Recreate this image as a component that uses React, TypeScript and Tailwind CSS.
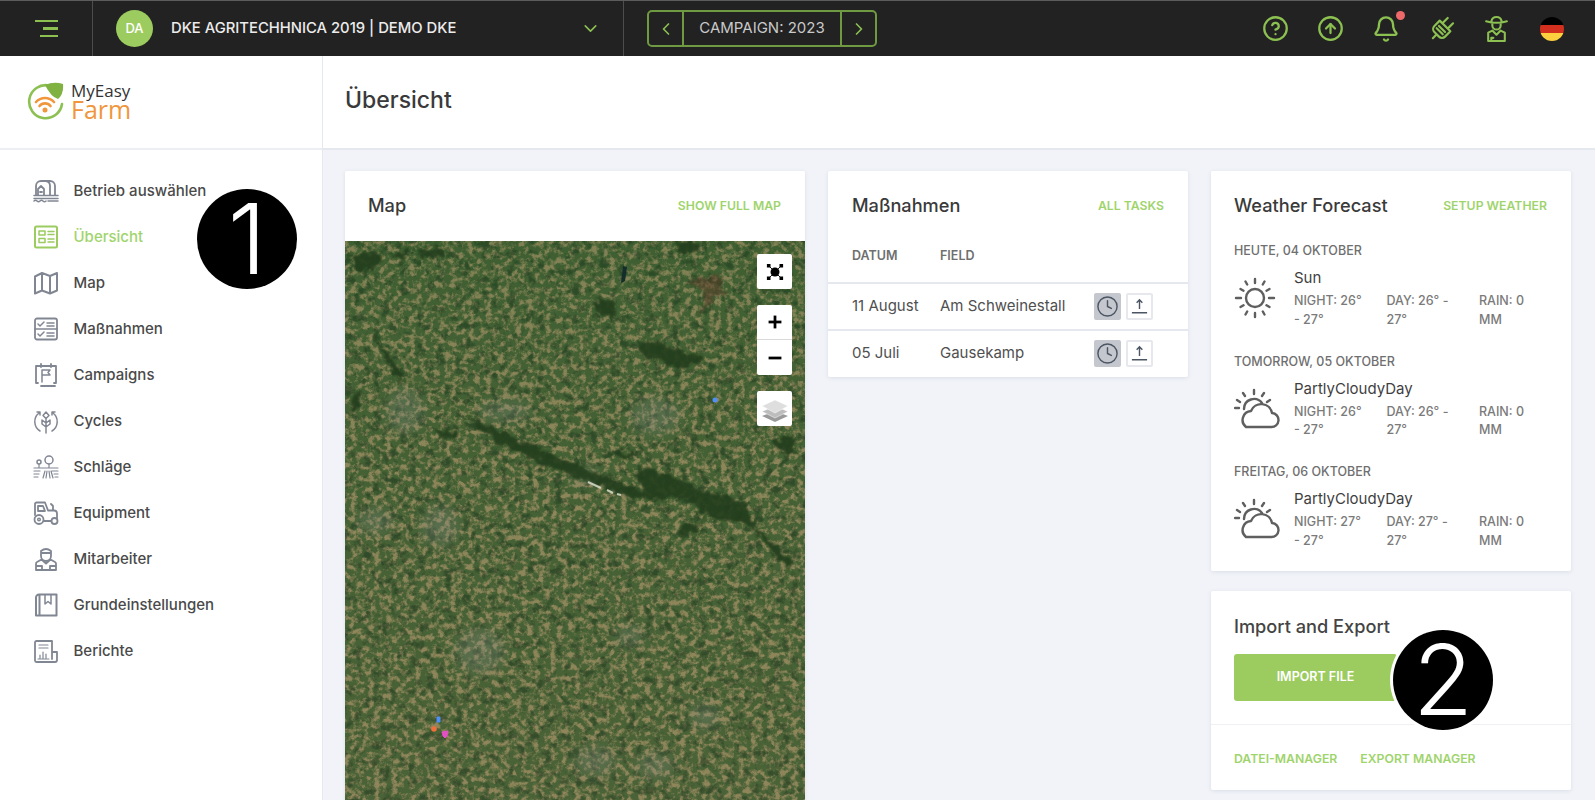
import React from 'react';
import { ChevronDown, ChevronLeft, ChevronRight, CircleHelp, CircleArrowUp, Bell, Clock, Plus, Minus } from 'lucide-react';

const Ico: React.FC<{ children: React.ReactNode; active?: boolean }> = ({ children, active }) => (
    <svg
        viewBox="0 0 26 26"
        fill="none"
        strokeWidth="1.5"
        strokeLinecap="round"
        strokeLinejoin="round"
        className={active ? 'w-[26px] h-[26px] stroke-[#9ccb5f]' : 'w-[26px] h-[26px] stroke-[#808692]'}
    >
        {children}
    </svg>
);

const navItems: { label: string; active?: boolean; icon: React.ReactNode }[] = [
    {
        label: 'Betrieb auswählen',
        icon: (
            <>
                <path d="M3 17V8a5 5 0 0 1 5-5h9a5 5 0 0 1 5 5v9" strokeWidth="1.800" />
                <path d="M13 3a5 5 0 0 1 4 5v9M5 17v-6l3-3 3 3v6M7 14h2" strokeWidth="1.800" />
                <path d="M1 17.500h24M1 20.500h24" />
                <path d="M1 23q1.500-1.500 3 0t3 0 3 0 3 0M15 23h10" />
            </>
        ),
    },
    {
        label: 'Übersicht',
        active: true,
        icon: (
            <>
                <rect x="2" y="2.500" width="22" height="21" rx="1.500" strokeWidth="2" />
                <rect x="6" y="7" width="6" height="4" />
                <rect x="6" y="14.500" width="6" height="4" />
                <path d="M15 7.500h6M15 10.500h6M15 15h6M15 18h6" />
            </>
        ),
    },
    {
        label: 'Map',
        icon: <path strokeWidth="2" d="M2 6.500 9 3l8 3 7-3v17.500L17 23.500l-8-3-7 3zM9 3v17.500M17 6v17.500" />,
    },
    {
        label: 'Maßnahmen',
        icon: (
            <>
                <rect x="2" y="2.500" width="22" height="21" rx="2" strokeWidth="1.800" />
                <path d="M2 13h22M5 8l2 2 4-4M5 18l2 2 4-4M14 7h7M14 10h7M14 17h7M14 20h7" />
            </>
        ),
    },
    {
        label: 'Campaigns',
        icon: (
            <>
                <path d="M5 4H3v17h2M21 4h2v17h-2M8 24h14M6 4h15M8 2v3M18 2v3" strokeWidth="1.800" />
                <path d="M9 20V8h8l-2 2.500L17 13H9" />
            </>
        ),
    },
    {
        label: 'Cycles',
        icon: (
            <>
                <path d="M13 25V10M13 4l3 3.500-3 3-3-3zM13 15l4-3v4l-4 3M13 15l-4-3v4l4 3" />
                <path d="M6 5a11 11 0 0 0 1 18M20 5a11 11 0 0 1-1 18M4 4l3 0 0 3M22 4l-3 0 0 3" />
            </>
        ),
    },
    {
        label: 'Schläge',
        icon: (
            <>
                <circle cx="16" cy="6" r="4" />
                <circle cx="6" cy="8" r="2" />
                <path d="M16 10v4M6 10v4M1 14h24M12 17l-2 7M14 17l-1 7M16 17l1 7M18 17l2 7M1 17h6M1 20h5M1 23h4M19 17h6M21 20h4M22 23h3" strokeWidth="1.200" />
            </>
        ),
    },
    {
        label: 'Equipment',
        icon: (
            <>
                <circle cx="6" cy="19.500" r="4.500" strokeWidth="1.800" />
                <circle cx="6" cy="19.500" r="1.300" />
                <circle cx="21.500" cy="21" r="3" strokeWidth="1.800" />
                <path d="M2 15V4a1.500 1.500 0 0 1 1.500-1.500H12l3 8h6a3 3 0 0 1 3 3v5M11 21h7M5 6h5l2 5H5zM20 10V6l-2-2" strokeWidth="1.800" />
            </>
        ),
    },
    {
        label: 'Mitarbeiter',
        icon: (
            <>
                <path d="M8 5q5-4 10 0v2H8zM8 7v3a5 5 0 0 0 10 0V7" strokeWidth="1.800" />
                <path d="M8.500 13.500 4 16a2 2 0 0 0-1 2v6h20v-6a2 2 0 0 0-1-2l-4.500-2.500L13 17.500zM3 20h6v4M23 20h-6v4" strokeWidth="1.800" />
            </>
        ),
    },
    {
        label: 'Grundeinstellungen',
        icon: (
            <>
                <path strokeWidth="2" d="M6 2.500h17.500v21H3V5.500a3 3 0 0 1 3-3zM6.500 2.500v21" />
                <path d="M12 3v9l3-2.500 3 2.500V3" />
            </>
        ),
    },
    {
        label: 'Berichte',
        icon: (
            <>
                <path strokeWidth="1.800" d="M19 21V3H3.500A1.500 1.500 0 0 0 2 4.500v18A1.500 1.500 0 0 0 3.500 24H22a2 2 0 0 0 2-2v-8h-5" />
                <path d="M6 7h9M6 10h9M7 20v-3M10 20v-6M13 20v-4M5 21h11" strokeWidth="1.200" />
            </>
        ),
    },
];

const days = [
    { title: 'HEUTE, 04 OKTOBER', name: 'Sun', night: '26°', day: '26°', sun: true },
    { title: 'TOMORROW, 05 OKTOBER', name: 'PartlyCloudyDay', night: '26°', day: '26°', sun: false },
    { title: 'FREITAG, 06 OKTOBER', name: 'PartlyCloudyDay', night: '27°', day: '27°', sun: false },
];

const tasks = [
    { date: '11 August', field: 'Am Schweinestall' },
    { date: '05 Juli', field: 'Gausekamp' },
];

const SunIcon = () => (
    <svg viewBox="0 0 42 42" className="w-[42px] h-[42px]" fill="none" stroke="#5f5f5f" strokeWidth="2.400" strokeLinecap="round">
        <circle cx="21" cy="21" r="9" />
        <path d="M21 2v4M21 36v4M2 21h5M35 21h5M6.500 12l3 1.700M32.500 28.300l3 1.700M6.500 30l3-1.700M32.500 13.700l3-1.700M11.500 4.500l1.700 3M28.800 34.500l1.700 3M11.500 37.500l1.700-3M28.800 7.500l1.700-3" />
    </svg>
);

const CloudSunIcon = () => (
    <svg viewBox="0 0 46 42" className="w-[46px] h-[42px]" fill="none" stroke="#5f5f5f" strokeWidth="2.400" strokeLinecap="round" strokeLinejoin="round">
        <path d="M20 2v4M9 5l2 3M30 5l-2 3M3 12l3 2M36 12l-3 2M1 20h4" />
        <path d="M10 21a10 10 0 0 1 18-6" />
        <path d="M12 39h25a7 7 0 0 0 1-14 11 11 0 0 0-21-2 9 9 0 0 0-5 16z" />
    </svg>
);

// satellite picture, faked with noise filters
const MapImage = () => (
    <svg viewBox="0 0 460 570" preserveAspectRatio="none" className="block w-full h-full">
        <defs>
            <filter id="fields" x="0" y="0" width="100%" height="100%" colorInterpolationFilters="sRGB">
                <feTurbulence type="fractalNoise" baseFrequency="0.17" numOctaves="4" seed="11" />
                <feColorMatrix values="0 0 0 0 0.66  0 0 0 0 0.58  0 0 0 0 0.41  4 0 0 0 -1.750" />
                <feGaussianBlur stdDeviation="0.5" />
            </filter>
            <filter id="dark" x="0" y="0" width="100%" height="100%" colorInterpolationFilters="sRGB">
                <feTurbulence type="fractalNoise" baseFrequency="0.11" numOctaves="4" seed="4" />
                <feColorMatrix values="0 0 0 0 0.13  0 0 0 0 0.24  0 0 0 0 0.13  0 4.500 0 0 -2.350" />
                <feGaussianBlur stdDeviation="0.5" />
            </filter>
            <filter id="rough" x="-20%" y="-20%" width="140%" height="140%">
                <feTurbulence type="fractalNoise" baseFrequency="0.1" numOctaves="3" seed="9" result="n" />
                <feDisplacementMap in="SourceGraphic" in2="n" scale="14" xChannelSelector="R" yChannelSelector="G" />
                <feGaussianBlur stdDeviation="0.8" />
            </filter>
            <filter id="softer" x="-30%" y="-30%" width="160%" height="160%">
                <feGaussianBlur stdDeviation="6" />
            </filter>
            <linearGradient id="tone" x1="0" y1="0" x2="0" y2="1">
                <stop offset="0" stopColor="#2f5c28" stopOpacity="0.18" />
                <stop offset="0.45" stopColor="#5b6a3a" stopOpacity="0.1" />
                <stop offset="1" stopColor="#7a7048" stopOpacity="0.15" />
            </linearGradient>
        </defs>
        <rect width="460" height="570" fill="#426034" />
        <rect width="460" height="570" filter="url(#fields)" opacity="0.8" />
        <rect width="460" height="570" filter="url(#dark)" opacity="0.7" />
        <rect width="460" height="570" fill="url(#tone)" />
        <g filter="url(#softer)" fill="#868d84" opacity="0.28">
            <ellipse cx="60" cy="170" rx="18" ry="22" />
            <ellipse cx="95" cy="285" rx="18" ry="20" />
            <ellipse cx="310" cy="175" rx="24" ry="18" />
            <ellipse cx="160" cy="170" rx="26" ry="10" />
            <ellipse cx="30" cy="280" rx="18" ry="12" />
            <ellipse cx="135" cy="410" rx="24" ry="22" />
            <ellipse cx="285" cy="395" rx="14" ry="10" />
            <ellipse cx="250" cy="520" rx="20" ry="14" />
            <ellipse cx="310" cy="525" rx="18" ry="12" />
            <ellipse cx="360" cy="475" rx="14" ry="12" />
            <ellipse cx="240" cy="235" rx="14" ry="8" />
        </g>
        <g filter="url(#rough)" fill="#203c1e" opacity="0.9">
            <path d="M120 172 165 195 205 213 250 232 300 250 345 254 340 258 290 258 235 238 190 219 150 202z" />
            <path d="M290 228 325 232 350 248 400 262 412 288 368 276 340 258 300 252z" />
            <path d="M405 284 425 298 448 320 444 326 418 302z" />
            <path d="M6 12 30 10 34 26 12 30zM46 14 62 8 58 22zM70 6 98 8 100 18 78 18z" />
            <path d="M250 60 272 60 272 74 254 76z" />
            <path d="M328 2 358 2 352 12 336 12z" />
            <path d="M30 95 55 130 60 143 54 140 36 110z" />
            <path d="M90 190 116 190 112 198 96 196z" />
            <path d="M292 100 318 104 360 118 340 126 300 116z" />
            <path d="M268 210 290 212 292 218 272 216z" />
            <path d="M426 198 452 198 448 212 432 210z" />
            <path d="M335 285 358 282 352 292 335 293z" />
            <path d="M5 155 15 150 18 168 6 172z" />
        </g>
        <path d="M345 42 372 32 378 50 355 72 362 52z" fill="#5b3b2b" opacity="0.5" filter="url(#rough)" />
        <path d="M278 25 282 26 280 40 276 42z" fill="#142d2d" />
        <path d="M243 241 256 247M262 249 268 252M272 253 276 254" stroke="#d9ddcb" strokeWidth="2" opacity="0.85" />
        <circle cx="370" cy="159" r="2.500" fill="#4f8ff7" />
        <path d="M92 476h3v5h-3z" fill="#4f8ff7" stroke="#4f8ff7" strokeLinejoin="round" />
        <circle cx="89" cy="488" r="2.800" fill="#ee6f3c" />
        <path d="M97 491 103 490 102 495 100 497 98 495z" fill="#e34fc4" stroke="#e34fc4" />
    </svg>
);

const Card: React.FC<{ children: React.ReactNode; className?: string }> = ({ children, className }) => (
    <div className={`bg-white rounded-[2px] shadow-[0_1px_4px_rgba(60,70,100,0.12)] ${className ?? ''}`}>{children}</div>
);

const CardHead: React.FC<{ title: string; link: string; pad?: string }> = ({ title, link, pad }) => (
    <div className={`flex items-center justify-between h-[70px] pr-6 ${pad ?? 'pl-[23px]'}`}>
        <h2 className="text-[18.200px] font-medium text-[#3a3a3a]">{title}</h2>
        <a className="text-[12.250px] font-semibold text-[#9fd46d]">{link}</a>
    </div>
);

const Badge: React.FC<{ n: string; className: string }> = ({ n, className }) => (
    <div className={`absolute w-[100px] h-[100px] rounded-full bg-black flex items-center justify-center text-white text-[98px] font-light leading-none ${className}`}>
        {n}
    </div>
);

const Stat: React.FC<{ first: string; second: string }> = ({ first, second }) => (
    <div>
        <div>{first}</div>
        <div>{second}</div>
    </div>
);

export default function App() {
    return (
        <div className="relative h-[800px] overflow-hidden bg-[#f1f3f8] font-['Inter',sans-serif]">
            <header className="flex h-[56px] items-stretch bg-[#222222] border-t border-[#5c5c5c]">
                <div className="w-[93px] flex items-center justify-center border-r border-[#4d4d4d]">
                    <div className="flex flex-col items-end gap-[5px]">
                        <span className="block w-[23px] h-[2.500px] bg-[#8cc152]" />
                        <span className="block w-[15px] h-[2.500px] bg-[#8cc152]" />
                        <span className="block w-[18px] h-[2.500px] bg-[#8cc152]" />
                    </div>
                </div>
                <div className="w-[531px] flex items-center pl-[23px] pr-[22px] border-r border-[#4d4d4d]">
                    <div className="w-[37px] h-[37px] rounded-full bg-[#9ccb5f] flex items-center justify-center text-[13px] font-medium text-white">DA</div>
                    <span className="ml-[18px] text-[14.800px] font-medium text-[#ececec]">DKE AGRITECHHNICA 2019 | DEMO DKE</span>
                    <ChevronDown className="ml-auto text-[#8cc152]" size={21} strokeWidth={1.8} />
                </div>
                <div className="flex items-center ml-[23px]">
                    <div className="flex h-[37px] w-[230px] items-stretch rounded-[5px] border-2 border-[#6f9a42] text-[#c9c9c9]">
                        <div className="w-[35px] flex items-center justify-center border-r-2 border-[#6f9a42]">
                            <ChevronLeft className="text-[#8cc152]" size={20} />
                        </div>
                        <div className="flex-1 flex items-center justify-center text-[15px]">CAMPAIGN: 2023</div>
                        <div className="w-[35px] flex items-center justify-center border-l-2 border-[#6f9a42]">
                            <ChevronRight className="text-[#8cc152]" size={20} />
                        </div>
                    </div>
                </div>
                <div className="ml-auto flex items-center pr-[15px] text-[#8cc152]">
                    <div className="w-[55.400px] flex justify-center"><CircleHelp size={27} strokeWidth={2} /></div>
                    <div className="w-[55.400px] flex justify-center"><CircleArrowUp size={27} strokeWidth={2} /></div>
                    <div className="w-[55.400px] flex justify-center">
                        <div className="relative">
                            <Bell size={28} strokeWidth={2} />
                            <span className="absolute -top-[4px] right-[-5px] w-[9px] h-[9px] rounded-full bg-[#ee6a6a]" />
                        </div>
                    </div>
                    <div className="w-[55.400px] flex justify-center">
                        <svg viewBox="0 0 26 26" className="w-[28px] h-[28px]" fill="none" stroke="currentColor" strokeWidth="2" strokeLinecap="round" strokeLinejoin="round">
                            <g transform="rotate(45 13 13)">
                                <path d="M6 9h14v7a4 4 0 0 1-4 4h-6a4 4 0 0 1-4-4zM9.500 9V2M16.500 9V2M13 20v5M9 13h8M9 16h8" />
                            </g>
                        </svg>
                    </div>
                    <div className="w-[55.400px] flex justify-center">
                        <svg viewBox="0 0 26 26" className="w-[27px] h-[27px]" fill="none" stroke="currentColor" strokeWidth="2" strokeLinecap="round" strokeLinejoin="round">
                            <path d="M3 6q10 3 20 0M8 6q1-4 5-4t5 4M9 7v3a4 4 0 0 0 8 0V7" />
                            <path d="M9 15 5 17v8h16v-8l-4-2-4 4zM8 25v-3h2" />
                        </svg>
                    </div>
                    <div className="w-[55.400px] flex justify-center">
                        <svg viewBox="0 0 24 24" className="w-[24px] h-[24px] rounded-full overflow-hidden">
                            <rect width="24" height="8" fill="#000000" />
                            <rect y="8" width="24" height="8" fill="#d22f1e" />
                            <rect y="16" width="24" height="8" fill="#fbcf3e" />
                        </svg>
                    </div>
                </div>
            </header>

            <div className="flex h-[744px]">
                <aside className="w-[323px] shrink-0 bg-white border-r border-[#e6e8ef]">
                    <div className="flex h-[94px] items-center pl-[27px] border-b-2 border-[#eceef3]">
                        <svg viewBox="0 0 38 38" className="w-[38px] h-[38px] -mt-[2px]" fill="none">
                            <path d="M22 3.500A16.500 16.500 0 1 0 35 22" stroke="#8cc152" strokeWidth="2.600" strokeLinecap="round" />
                            <path d="M18 3q9-4 18-1 1 10-5 15-7-2-13-14z" fill="#7fb241" />
                            <path d="M9 20a12 12 0 0 1 18 0M12.500 24a7 7 0 0 1 11 0" stroke="#f0963c" strokeWidth="2.600" strokeLinecap="round" />
                            <circle cx="18" cy="28" r="2.500" fill="#f0963c" />
                        </svg>
                        <div className="ml-[6px] flex flex-col font-['Open_Sans',sans-serif] -mt-[2px]">
                            <span className="text-[17px] leading-[17px] text-[#333333]">MyEasy</span>
                            <span className="text-[25px] leading-[21px] font-medium text-[#f0963c]">Farm</span>
                        </div>
                    </div>
                    <nav className="flex flex-col pt-[18px] pl-[33px]">
                        {navItems.map((item) => (
                            <a key={item.label} className="flex h-[46px] items-center gap-[14.500px]">
                                <Ico active={item.active}>{item.icon}</Ico>
                                <span className={item.active ? 'text-[15px] font-medium text-[#9fd46d]' : 'text-[15px] font-medium text-[#4a4a4a]'}>{item.label}</span>
                            </a>
                        ))}
                    </nav>
                </aside>

                <main className="flex-1 min-w-0">
                    <div className="flex h-[94px] items-center bg-white pl-[22px] pb-[4px] border-b-2 border-[#e6e8ef]">
                        <h1 className="text-[23px] font-medium text-[#3a3a3a]">Übersicht</h1>
                    </div>
                    <div className="grid grid-cols-[460px_360px_360px] gap-[23px] pl-[22px] pt-[21px]">
                        <Card className="flex flex-col h-[640px]">
                            <CardHead title="Map" link="SHOW FULL MAP" />
                            <div className="relative flex-1 min-h-0 overflow-hidden">
                                <MapImage />
                                <div className="absolute top-[13px] right-[13px] flex flex-col">
                                    <button className="w-[35px] h-[35px] bg-white rounded-[2px] flex items-center justify-center">
                                        <svg viewBox="0 0 20 20" className="w-[18px] h-[18px]" fill="#000000">
                                            <circle cx="10" cy="10" r="5" />
                                            <path d="M1 1h4v4H1zM15 1h4v4h-4zM1 15h4v4H1zM15 15h4v4h-4z" />
                                            <path d="M3 3l14 14M17 3 3 17" stroke="#000000" strokeWidth="1" />
                                        </svg>
                                    </button>
                                    <button className="mt-[16px] w-[35px] h-[35px] bg-white rounded-t-[2px] flex items-center justify-center border-b border-[#d9d9d9]">
                                        <Plus className="text-black" size={22} strokeWidth={3} strokeLinecap="butt" />
                                    </button>
                                    <button className="w-[35px] h-[35px] bg-white rounded-b-[2px] flex items-center justify-center">
                                        <Minus className="text-black" size={22} strokeWidth={3} strokeLinecap="butt" />
                                    </button>
                                    <button className="mt-[16px] w-[35px] h-[35px] bg-white rounded-[2px] flex items-center justify-center">
                                        <svg viewBox="0 0 28 28" className="w-[28px] h-[28px]">
                                            <path d="M14 16 27 21 14 27 1 21z" fill="#9a9a9a" />
                                            <path d="M14 11 27 16.500 14 23 1 16.500z" fill="#bdbdbd" stroke="#ffffff" strokeWidth="0.500" />
                                            <path d="M14 5 27 11 14 18 1 11z" fill="#dedede" stroke="#ffffff" strokeWidth="0.500" />
                                        </svg>
                                    </button>
                                </div>
                            </div>
                        </Card>

                        <Card className="h-[206px] self-start">
                            <CardHead title="Maßnahmen" link="ALL TASKS" pad="pl-6" />
                            <div className="flex h-[41px] items-start pt-[6px] px-6 text-[12.500px] font-semibold text-[#6f6f6f]">
                                <span className="w-[88px]">DATUM</span>
                                <span>FIELD</span>
                            </div>
                            {tasks.map((t) => (
                                <div key={t.date} className="flex h-[47px] items-center border-t-2 border-[#e6e8f0] px-6 text-[15px] text-[#4f4f4f]">
                                    <span className="w-[88px]">{t.date}</span>
                                    <span className="flex-1">{t.field}</span>
                                    <div className="flex gap-[5px] mr-[11px]">
                                        <button className="w-[27px] h-[27px] rounded-[2px] bg-[#c4c7cd] flex items-center justify-center">
                                            <Clock className="text-[#4b5563]" size={23} strokeWidth={1.5} />
                                        </button>
                                        <button className="w-[27px] h-[27px] rounded-[2px] border-2 border-[#e6e8ee] bg-white flex items-center justify-center">
                                            <svg viewBox="0 0 20 20" className="w-[19px] h-[19px]" fill="none" stroke="#4b5563" strokeWidth="1.500">
                                                <path d="M10 12.500V3M7 6l3-3 3 3M2 16.500h16" />
                                            </svg>
                                        </button>
                                    </div>
                                </div>
                            ))}
                        </Card>

                        <div className="flex flex-col gap-[20px]">
                            <Card className="h-[400px]">
                                <CardHead title="Weather Forecast" link="SETUP WEATHER" />
                                <div className="flex flex-col pl-[23px] pr-6 pt-[1px]">
                                    {days.map((d) => (
                                        <div key={d.title} className="h-[110.500px]">
                                            <div className="text-[12.500px] leading-[18px] font-medium text-[#6f6f6f]">{d.title}</div>
                                            <div className="flex mt-[8px]">
                                                <div className="w-[60px] shrink-0 pt-[9px]">{d.sun ? <SunIcon /> : <CloudSunIcon />}</div>
                                                <div className="flex-1">
                                                    <div className="text-[15px] leading-[20px] text-[#3f3f3f]">{d.name}</div>
                                                    <div className="grid grid-cols-3 w-[277.500px] mt-[4px] text-[12.500px] leading-[18.500px] font-medium text-[#7a7a7a]">
                                                        <Stat first={`NIGHT: ${d.night}`} second="- 27°" />
                                                        <Stat first={`DAY: ${d.day} -`} second="27°" />
                                                        <Stat first="RAIN: 0" second="MM" />
                                                    </div>
                                                </div>
                                            </div>
                                        </div>
                                    ))}
                                </div>
                            </Card>
                            <Card className="h-[199px]">
                                <div className="pl-[23px] pr-6 pt-[24px] h-[134px] border-b border-[#eef0f4]">
                                    <h2 className="text-[18.200px] leading-[22px] font-medium text-[#444444]">Import and Export</h2>
                                    <button className="mt-[17px] w-[163px] h-[47px] rounded-[3px] bg-[#9ccb5f] text-white text-[12.500px] font-semibold">IMPORT FILE</button>
                                </div>
                                <div className="flex h-[65px] items-center gap-[23px] pl-[23px] pr-6 pt-[4px] text-[12.250px] font-semibold text-[#9fd46d]">
                                    <a>DATEI-MANAGER</a>
                                    <a>EXPORT MANAGER</a>
                                </div>
                            </Card>
                        </div>
                    </div>
                </main>
            </div>

            <Badge n="1" className="left-[197px] top-[189px]" />
            <div className="absolute left-[1390px] top-[627px] w-[106px] h-[106px] rounded-full bg-white" />
            <Badge n="2" className="left-[1393px] top-[630px]" />
        </div>
    );
}
